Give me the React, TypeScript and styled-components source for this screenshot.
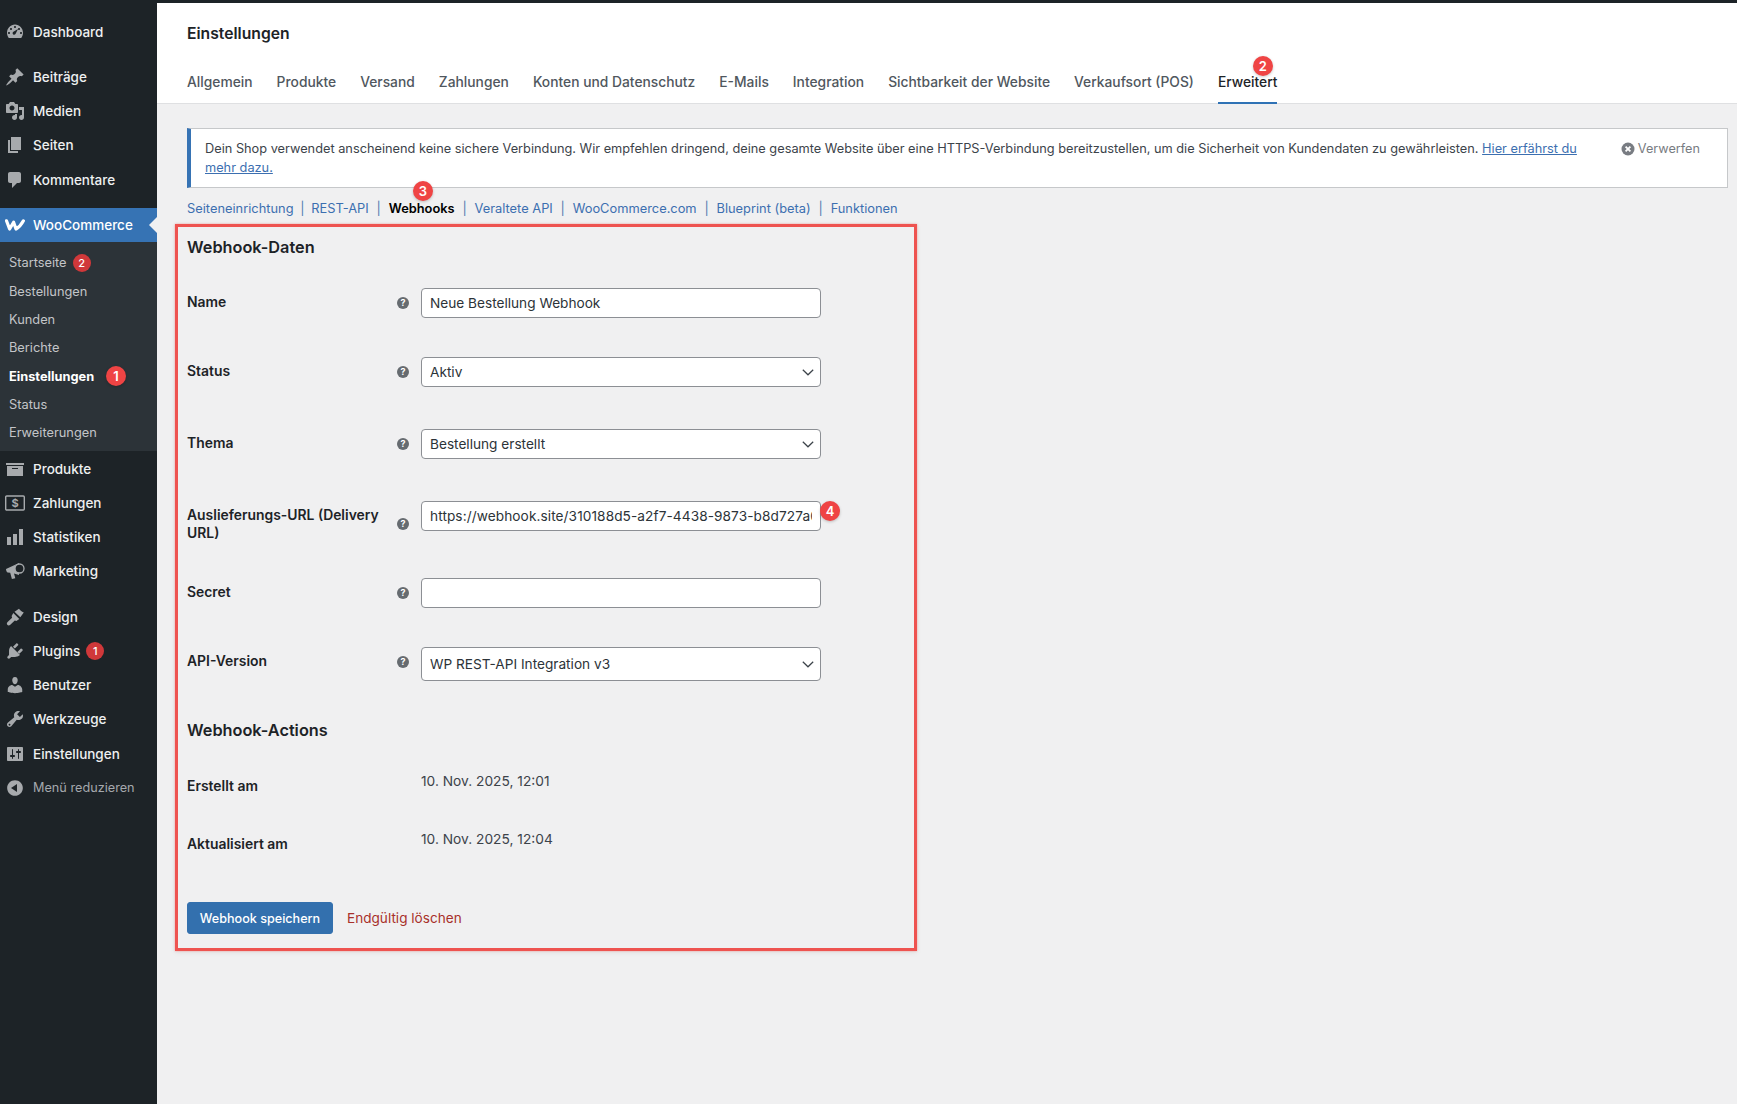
import React from "react";
import styled, { createGlobalStyle } from "styled-components";

const Global = createGlobalStyle`
  html, body { margin: 0; padding: 0; background: #f0f0f1; }
  body { font-family: Inter, "Noto Sans", "Liberation Sans", sans-serif; color: #3c434a; overflow: hidden; }
  * { box-sizing: border-box; }
`;

const Page = styled.div`
  width: 1737px;
  height: 1104px;
  display: flex;
  flex-direction: column;
  overflow: hidden;
`;
const TopBar = styled.div`
  height: 3px;
  flex: none;
  background: #1d2327;
`;
const Shell = styled.div`
  flex: 1;
  display: flex;
  min-height: 0;
`;

/* ---------- sidebar ---------- */
const Sidebar = styled.nav`
  width: 157px;
  flex: none;
  background: #1d2327;
  padding-top: 11.5px;
`;
const MenuGroup = styled.div`
  margin-bottom: 11px;
`;
const MenuItem = styled.div<{ $active?: boolean; $muted?: boolean }>`
  position: relative;
  height: 34.25px;
  display: flex;
  align-items: center;
  gap: 8px;
  padding-left: 5px;
  font-size: ${(p) => (p.$muted ? 12.7 : 13.5)}px;
  font-weight: ${(p) => (p.$muted ? 400 : 500)};
  white-space: nowrap;
  color: ${(p) => (p.$muted ? "#a4a8ad" : p.$active ? "#ffffff" : "#eef0f1")};
  background: ${(p) => (p.$active ? "#3673b4" : "transparent")};
  svg { flex: none; fill: ${(p) => (p.$active ? "#ffffff" : "#a7aaad")}; }
`;
const ActiveArrow = styled.span`
  position: absolute;
  right: 0;
  top: 9px;
  border: 8px solid transparent;
  border-right-color: #f0f0f1;
  border-left-width: 0;
`;
const Submenu = styled.div`
  background: #2c3338;
  padding: 6.5px 0 4.5px;
`;
const SubItem = styled.div<{ $current?: boolean }>`
  position: relative;
  height: 28.35px;
  display: flex;
  align-items: center;
  gap: 6px;
  padding-left: 9px;
  font-size: 12.8px;
  font-weight: ${(p) => (p.$current ? 700 : 400)};
  color: ${(p) => (p.$current ? "#ffffff" : "#c3c5c8")};
  white-space: nowrap;
`;
const CountBadge = styled.span`
  width: 18px;
  height: 18px;
  border-radius: 50%;
  display: inline-flex;
  align-items: center;
  justify-content: center;
  background: #d0383a;
  color: #fff;
  font-size: 11px;
  font-weight: 500;
`;
const PluginBadge = styled(CountBadge)`
  margin-left: -2px;
`;

/* ---------- annotation ---------- */
const Marker = styled.span<{ $top: number; $left: number }>`
  position: absolute;
  top: ${(p) => p.$top}px;
  left: ${(p) => p.$left}px;
  width: 20px;
  height: 20px;
  border-radius: 50%;
  background: #ef4444;
  color: #fff;
  font-size: 13px;
  font-weight: 600;
  display: flex;
  align-items: center;
  justify-content: center;
  box-shadow: 0 1px 3px rgba(0, 0, 0, 0.22);
  z-index: 2;
`;

/* ---------- main ---------- */
const Main = styled.main`
  flex: 1;
  min-width: 0;
  background: #f0f0f1;
`;
const Header = styled.header`
  height: 101px;
  background: #fff;
  border-bottom: 1px solid #dfe0e2;
  padding: 20px 0 0 30px;
`;
const Title = styled.h1`
  margin: 0;
  height: 22px;
  line-height: 22px;
  font-size: 15.7px;
  font-weight: 600;
  color: #1d2327;
`;
const Tabs = styled.div`
  display: flex;
  gap: 24px;
  margin-top: 18px;
`;
const Tab = styled.a<{ $active?: boolean }>`
  position: relative;
  height: 41px;
  padding-top: 9px;
  line-height: 20px;
  font-size: 13.82px;
  font-weight: 500;
  white-space: nowrap;
  color: ${(p) => (p.$active ? "#1d2327" : "#50575e")};
  border-bottom: 2px solid ${(p) => (p.$active ? "#2f72b5" : "transparent")};
`;
const Content = styled.div`
  padding: 24px 9px 0 30px;
`;
const Notice = styled.div`
  height: 60px;
  display: flex;
  align-items: flex-start;
  background: #fff;
  border: 1px solid #c6c8ca;
  border-left: 4px solid #3673b4;
  padding: 10px 27px 0 14px;
  font-size: 12.77px;
  line-height: 19px;
  color: #3c434a;
`;
const NoticeText = styled.p`
  margin: 0;
  flex: 1;
  max-width: 1395px;
`;
const InlineLink = styled.a`
  color: #3c6fb0;
  text-decoration: underline;
`;
const Dismiss = styled.span`
  margin-left: auto;
  display: flex;
  align-items: center;
  gap: 3px;
  font-size: 12.7px;
  color: #787c82;
  white-space: nowrap;
`;
const SubNav = styled.div`
  position: relative;
  height: 36px;
  padding-top: 4px;
  display: flex;
  align-items: center;
  font-size: 12.85px;
  white-space: nowrap;
`;
const SubLink = styled.a<{ $current?: boolean }>`
  color: ${(p) => (p.$current ? "#000" : "#3c6fb0")};
  font-weight: ${(p) => (p.$current ? 600 : 400)};
`;
const Sep = styled.span<{ $narrow?: boolean }>`
  width: ${(p) => (p.$narrow ? 17.7 : 19.9)}px;
  text-align: center;
  color: #4d7bb0;
`;
const Panel = styled.section`
  width: 742px;
  height: 727px;
  margin-left: -12.5px;
  padding: 0 9.5px;
  border: 3px solid #ee5350;
  box-shadow: 0 0 2px rgba(238, 83, 80, 0.5), 0 2px 6px rgba(0, 0, 0, 0.05);
`;
const SectionTitle = styled.h2<{ $gap?: number; $after?: number }>`
  margin: ${(p) => p.$gap ?? 0}px 0 ${(p) => p.$after ?? 0}px;
  height: 40px;
  line-height: 40px;
  font-size: 16.3px;
  font-weight: 600;
  color: #1d2327;
`;
const Row = styled.div<{ $after: number }>`
  position: relative;
  display: grid;
  grid-template-columns: 210px 12px 400px;
  margin-bottom: ${(p) => p.$after}px;
`;
const FieldCell = styled.div`
  position: relative;
  margin-left: 12px;
  width: 400px;
`;
const Label = styled.label`
  display: block;
  padding-top: 5px;
  padding-right: 4px;
  line-height: 18px;
  font-size: 13.9px;
  font-weight: 600;
  color: #1d2327;
`;
const Help = styled.span<{ $top?: number }>`
  margin-top: ${(p) => p.$top ?? 8.7}px;
  width: 12px;
  height: 12px;
  border-radius: 50%;
  background: #666b70;
  color: #fff;
  display: flex;
  align-items: center;
  justify-content: center;
  font-size: 9px;
  font-weight: 700;
  line-height: 12px;
`;
const TextInput = styled.input<{ $spread?: boolean }>`
  display: block;
  width: 400px;
  height: 30px;
  padding: 0 8px 1px;
  border: 1px solid #8c8f94;
  border-radius: 4px;
  background: #fff;
  font: 400 13.65px Inter, "Noto Sans", sans-serif;
  letter-spacing: ${(p) => (p.$spread ? "0.09px" : "normal")};
  color: #2c3338;
  outline: none;
`;
const SelectInput = styled.select<{ $tall?: boolean }>`
  display: block;
  width: 400px;
  height: ${(p) => (p.$tall ? 34 : 30)}px;
  padding: 0 24px 1px 8px;
  border: 1px solid #8c8f94;
  border-radius: 4px;
  background: #fff;
  font: 400 13.65px Inter, "Noto Sans", sans-serif;
  color: #2c3338;
  appearance: none;
  outline: none;
`;
const Chevron = styled.svg`
  position: absolute;
  right: 6px;
  top: 50%;
  transform: translateY(-50%);
  pointer-events: none;
`;
const Value = styled.div`
  margin-left: 12px;
  line-height: 18px;
  font-size: 13.75px;
  color: #3c434a;
`;
const Actions = styled.div`
  display: flex;
  align-items: center;
  gap: 14px;
`;
const SaveButton = styled.button`
  width: 146px;
  height: 32px;
  border: 1px solid #3370ae;
  border-radius: 3px;
  background: #3370ae;
  color: #fff;
  font: 500 12.6px Inter, "Noto Sans", sans-serif;
  padding: 0;
`;
const DeleteLink = styled.a`
  color: #a8302b;
  font-size: 13.6px;
`;

const paths: Record<string, string> = {
  dashboard:
    "M3.76 16h12.48c1.1-1.43 1.76-3.21 1.76-5.15 0-4.65-3.58-8.35-8-8.35s-8 3.7-8 8.35c0 1.94.66 3.72 1.76 5.15zM10 4c.55 0 1 .45 1 1s-.45 1-1 1-1-.45-1-1 .45-1 1-1zM6 6c.55 0 1 .45 1 1s-.45 1-1 1-1-.45-1-1 .45-1 1-1zm8 0c.55 0 1 .45 1 1s-.45 1-1 1-1-.45-1-1 .45-1 1-1zM8 10l5-3-2.5 5c-.5.75-1.5 1-2.2.5S7.4 11 8 10zM4 10c.55 0 1 .45 1 1s-.45 1-1 1-1-.45-1-1 .45-1 1-1zm12 0c.55 0 1 .45 1 1s-.45 1-1 1-1-.45-1-1 .45-1 1-1z",
  post: "M10.44 3.02l1.82-1.82 6.36 6.35-1.83 1.82c-1.05-.68-2.48-.57-3.41.36l-.75.75c-.92.93-1.04 2.35-.35 3.41l-1.83 1.82-2.41-2.41-2.8 2.79c-.42.42-3.38 2.71-3.8 2.29s1.86-3.39 2.28-3.81l2.79-2.79L4.1 9.36l1.83-1.82c1.05.69 2.48.57 3.4-.36l.75-.75c.93-.92 1.05-2.35.36-3.41z",
  media:
    "M13 11V4c0-.55-.45-1-1-1h-1.67L9 1H5L3.67 3H2c-.55 0-1 .45-1 1v7c0 .55.45 1 1 1h10c.55 0 1-.45 1-1zM7 4.5c1.38 0 2.5 1.12 2.5 2.5S8.38 9.5 7 9.5 4.5 8.38 4.5 7 5.62 4.5 7 4.5zM14 6h5v10.5c0 1.38-1.12 2.5-2.5 2.5S14 17.88 14 16.5s1.12-2.5 2.5-2.5c.17 0 .34.02.5.05V9h-3V6zm-4 8.05V13h2v3.5c0 1.38-1.12 2.5-2.5 2.5S7 17.88 7 16.5 8.12 14 9.5 14c.17 0 .34.02.5.05z",
  page: "M6 15V2h10v13H6zm-1 1h8v2H3V5h2v11z",
  comments: "M5 2h9c1.1 0 2 .9 2 2v7c0 1.1-.9 2-2 2h-2l-5 5v-5H5c-1.1 0-2-.9-2-2V4c0-1.1.9-2 2-2z",
  archive: "M19 4v2H1V4h18zM2 7h16v10H2V7zm11 3V9H7v1h6z",
  chart: "M18 18V2h-4v16h4zm-6 0V7H8v11h4zm-6 0v-8H2v8h4z",
  appearance:
    "M9.5 4.8L14 1.8c.9 1.5 2.5 2.9 4.8 3.6l-3.5 4.8zM8.3 6l6 5.9-2.9 2-1.6-.5-4.5 4.3c-1 1-2.3.9-3 .1-.7-.9-.6-1.9.3-2.8l4.5-4.3-.5-1.6z",
  plugins:
    "M13.11 4.36L9.87 7.6 8 5.73l3.24-3.24c.35-.34 1.05-.2 1.56.32.52.51.66 1.21.31 1.55zM5.11 6.13l.91-1.12 9.01 9.01-1.19.84c-.71.71-2.63 1.16-3.82 1.16H6.14L4.9 17.26c-.59.59-1.54.59-2.12 0-.59-.58-.59-1.53 0-2.12l1.24-1.24v-3.88c0-1.13.41-3.05 1.12-3.76zM17.51 9.63l-3.24 3.24-1.87-1.87 3.24-3.24c.35-.34 1.05-.2 1.56.32.52.51.66 1.21.31 1.55z",
  users:
    "M10 9.25c-2.27 0-2.73-3.44-2.73-3.44C7 4.02 7.82 2 9.97 2c2.16 0 2.98 2.02 2.71 3.81 0 0-.41 3.44-2.68 3.44zm0 2.57L12.72 10c2.39 0 4.52 2.33 4.52 4.53v2.49s-3.65 1.13-7.24 1.13c-3.65 0-7.24-1.13-7.24-1.13v-2.49c0-2.25 1.94-4.48 4.47-4.48z",
  tools:
    "M16.68 9.77c-1.34 1.34-3.3 1.67-4.95.99l-5.41 6.52c-.99.99-2.59.99-3.58 0s-.99-2.59 0-3.57l6.52-5.42c-.68-1.65-.35-3.61.99-4.95 1.28-1.28 3.12-1.62 4.72-1.06l-2.89 2.89 2.82 2.82 2.86-2.86c.56 1.6.22 3.44-1.06 4.72zM3.81 16.37c.39.39 1.03.39 1.42 0 .38-.39.38-1.03 0-1.42-.39-.38-1.03-.38-1.42 0-.38.39-.38 1.03 0 1.42z",
  settings:
    "M18 16V4c0-.55-.45-1-1-1H3c-.55 0-1 .45-1 1v12c0 .55.45 1 1 1h14c.55 0 1-.45 1-1zM8 11h1c.55 0 1 .45 1 1s-.45 1-1 1H8v1.5c0 .28-.22.5-.5.5s-.5-.22-.5-.5V13H6c-.55 0-1-.45-1-1s.45-1 1-1h1V5.5c0-.28.22-.5.5-.5s.5.22.5.5V11zm5-2h-1c-.55 0-1-.45-1-1s.45-1 1-1h1V5.5c0-.28.22-.5.5-.5s.5.22.5.5V7h1c.55 0 1 .45 1 1s-.45 1-1 1h-1v5.5c0 .28-.22.5-.5.5s-.5-.22-.5-.5V9z",
  collapse:
    "M10 2.16c4.33 0 7.84 3.51 7.84 7.84s-3.51 7.84-7.84 7.84S2.16 14.33 2.16 10 5.67 2.16 10 2.16zm2 11.84V6l-6 4z",
};

const Icon = ({ name }: { name: string }) => (
  <svg width="20" height="20" viewBox="0 0 20 20">
    <path fillRule="evenodd" d={paths[name]} />
  </svg>
);

const MoneyIcon = () => (
  <svg width="20" height="20" viewBox="0 0 20 20">
    <rect x="0.7" y="3" width="18.6" height="14" rx="1" fill="none" stroke="#a7aaad" strokeWidth="1.4" />
    <text x="10" y="14.2" textAnchor="middle" fontSize="11" fontWeight="700" fontFamily="Inter, sans-serif">$</text>
  </svg>
);

const MegaphoneIcon = () => (
  <svg width="20" height="20" viewBox="0 0 20 20">
    <path d="M1 8L14 2v12L9 12.6l1.3 4.6-3.4.9-1.7-6.3-2.6-.4C1.6 11 1 9.5 1 8z" />
    <circle cx="14.5" cy="7.5" r="4.5" fill="#1d2327" stroke="#a7aaad" strokeWidth="1.3" />
  </svg>
);

const WooIcon = () => (
  <svg width="20" height="20" viewBox="0 0 20 20">
    <path
      d="M1.5 5.8 L4.6 14 L8.6 7.2 L11 14 C13.8 12.4 16 10.4 18.4 5.8"
      fill="none"
      stroke="#fff"
      strokeWidth="3.2"
      strokeLinecap="round"
      strokeLinejoin="round"
    />
  </svg>
);

const ChevronDown = () => (
  <Chevron width="14" height="14" viewBox="0 0 14 14">
    <path d="M1.8 4.8l5.2 5 5.2-5" fill="none" stroke="#3c434a" strokeWidth="1.2" />
  </Chevron>
);

const DismissIcon = () => (
  <svg width="14" height="14" viewBox="0 0 14 14">
    <circle cx="7" cy="7" r="6.5" fill="#787c82" />
    <path d="M4.6 4.6l4.8 4.8M9.4 4.6l-4.8 4.8" stroke="#fff" strokeWidth="1.8" />
  </svg>
);

type Entry = { icon?: string; label: string; badge?: string; custom?: React.ReactNode };

const groupOne: Entry[] = [{ icon: "dashboard", label: "Dashboard" }];
const groupTwo: Entry[] = [
  { icon: "post", label: "Beiträge" },
  { icon: "media", label: "Medien" },
  { icon: "page", label: "Seiten" },
  { icon: "comments", label: "Kommentare" },
];
const groupFour: Entry[] = [
  { icon: "archive", label: "Produkte" },
  { label: "Zahlungen", custom: <MoneyIcon /> },
  { icon: "chart", label: "Statistiken" },
  { label: "Marketing", custom: <MegaphoneIcon /> },
];
const groupFive: Entry[] = [
  { icon: "appearance", label: "Design" },
  { icon: "plugins", label: "Plugins", badge: "1" },
  { icon: "users", label: "Benutzer" },
  { icon: "tools", label: "Werkzeuge" },
  { icon: "settings", label: "Einstellungen" },
];

const renderItem = (e: Entry) => (
  <MenuItem key={e.label}>
    {e.icon ? <Icon name={e.icon} /> : e.custom}
    {e.label}
    {e.badge && <PluginBadge>{e.badge}</PluginBadge>}
  </MenuItem>
);

const tabs = [
  "Allgemein",
  "Produkte",
  "Versand",
  "Zahlungen",
  "Konten und Datenschutz",
  "E-Mails",
  "Integration",
  "Sichtbarkeit der Website",
  "Verkaufsort (POS)",
];

const sections = ["Seiteneinrichtung", "REST-API", "Webhooks", "Veraltete API", "WooCommerce.com", "Blueprint (beta)", "Funktionen"];

export default function App() {
  return (
    <Page>
      <Global />
      <TopBar />
      <Shell>
        <Sidebar>
          <MenuGroup>{groupOne.map(renderItem)}</MenuGroup>
          <MenuGroup>{groupTwo.map(renderItem)}</MenuGroup>
          <MenuItem $active>
            <WooIcon />
            WooCommerce
            <ActiveArrow />
          </MenuItem>
          <Submenu>
            <SubItem>
              Startseite <CountBadge>2</CountBadge>
            </SubItem>
            <SubItem>Bestellungen</SubItem>
            <SubItem>Kunden</SubItem>
            <SubItem>Berichte</SubItem>
            <SubItem $current>
              Einstellungen
              <Marker $top={4} $left={106}>1</Marker>
            </SubItem>
            <SubItem>Status</SubItem>
            <SubItem>Erweiterungen</SubItem>
          </Submenu>
          <MenuGroup>{groupFour.map(renderItem)}</MenuGroup>
          {groupFive.map(renderItem)}
          <MenuItem $muted>
            <Icon name="collapse" />
            Menü reduzieren
          </MenuItem>
        </Sidebar>
        <Main>
          <Header>
            <Title>Einstellungen</Title>
            <Tabs>
              {tabs.map((t) => (
                <Tab key={t}>{t}</Tab>
              ))}
              <Tab $active>
                Erweitert
                <Marker $top={-7} $left={35}>2</Marker>
              </Tab>
            </Tabs>
          </Header>
          <Content>
            <Notice>
              <NoticeText>
                Dein Shop verwendet anscheinend keine sichere Verbindung. Wir empfehlen dringend, deine gesamte Website
                über eine HTTPS-Verbindung bereitzustellen, um die Sicherheit von Kundendaten zu gewährleisten.{" "}
                <InlineLink>Hier erfährst du mehr dazu.</InlineLink>
              </NoticeText>
              <Dismiss>
                <DismissIcon />
                Verwerfen
              </Dismiss>
            </Notice>
            <SubNav>
              {sections.map((s, i) => (
                <React.Fragment key={s}>
                  {i > 0 && <Sep $narrow={i === 1}>|</Sep>}
                  <SubLink $current={s === "Webhooks"}>{s}</SubLink>
                </React.Fragment>
              ))}
              <Marker $top={-7} $left={226}>3</Marker>
            </SubNav>
            <Panel>
              <SectionTitle $after={21}>Webhook-Daten</SectionTitle>
              <Row $after={39}>
                <Label>Name</Label>
                <Help>?</Help>
                <FieldCell>
                  <TextInput defaultValue="Neue Bestellung Webhook" />
                </FieldCell>
              </Row>
              <Row $after={42}>
                <Label>Status</Label>
                <Help>?</Help>
                <FieldCell>
                  <SelectInput defaultValue="Aktiv">
                    <option>Aktiv</option>
                  </SelectInput>
                  <ChevronDown />
                </FieldCell>
              </Row>
              <Row $after={42}>
                <Label>Thema</Label>
                <Help>?</Help>
                <FieldCell>
                  <SelectInput defaultValue="Bestellung erstellt">
                    <option>Bestellung erstellt</option>
                  </SelectInput>
                  <ChevronDown />
                </FieldCell>
              </Row>
              <Row $after={36}>
                <Label>Auslieferungs-URL (Delivery URL)</Label>
                <Help $top={17.3}>?</Help>
                <FieldCell>
                  <TextInput $spread defaultValue="https://webhook.site/310188d5-a2f7-4438-9873-b8d727a0e1f4" />
                  <Marker $top={0} $left={399}>4</Marker>
                </FieldCell>
              </Row>
              <Row $after={39}>
                <Label>Secret</Label>
                <Help>?</Help>
                <FieldCell>
                  <TextInput />
                </FieldCell>
              </Row>
              <Row $after={0}>
                <Label>API-Version</Label>
                <Help>?</Help>
                <FieldCell>
                  <SelectInput $tall defaultValue="WP REST-API Integration v3">
                    <option>WP REST-API Integration v3</option>
                  </SelectInput>
                  <ChevronDown />
                </FieldCell>
              </Row>
              <SectionTitle $gap={29} $after={22}>Webhook-Actions</SectionTitle>
              <Row $after={35}>
                <Label>Erstellt am</Label>
                <span />
                <Value>10. Nov. 2025, 12:01</Value>
              </Row>
              <Row $after={49}>
                <Label>Aktualisiert am</Label>
                <span />
                <Value>10. Nov. 2025, 12:04</Value>
              </Row>
              <Actions>
                <SaveButton>Webhook speichern</SaveButton>
                <DeleteLink>Endgültig löschen</DeleteLink>
              </Actions>
            </Panel>
          </Content>
        </Main>
      </Shell>
    </Page>
  );
}
